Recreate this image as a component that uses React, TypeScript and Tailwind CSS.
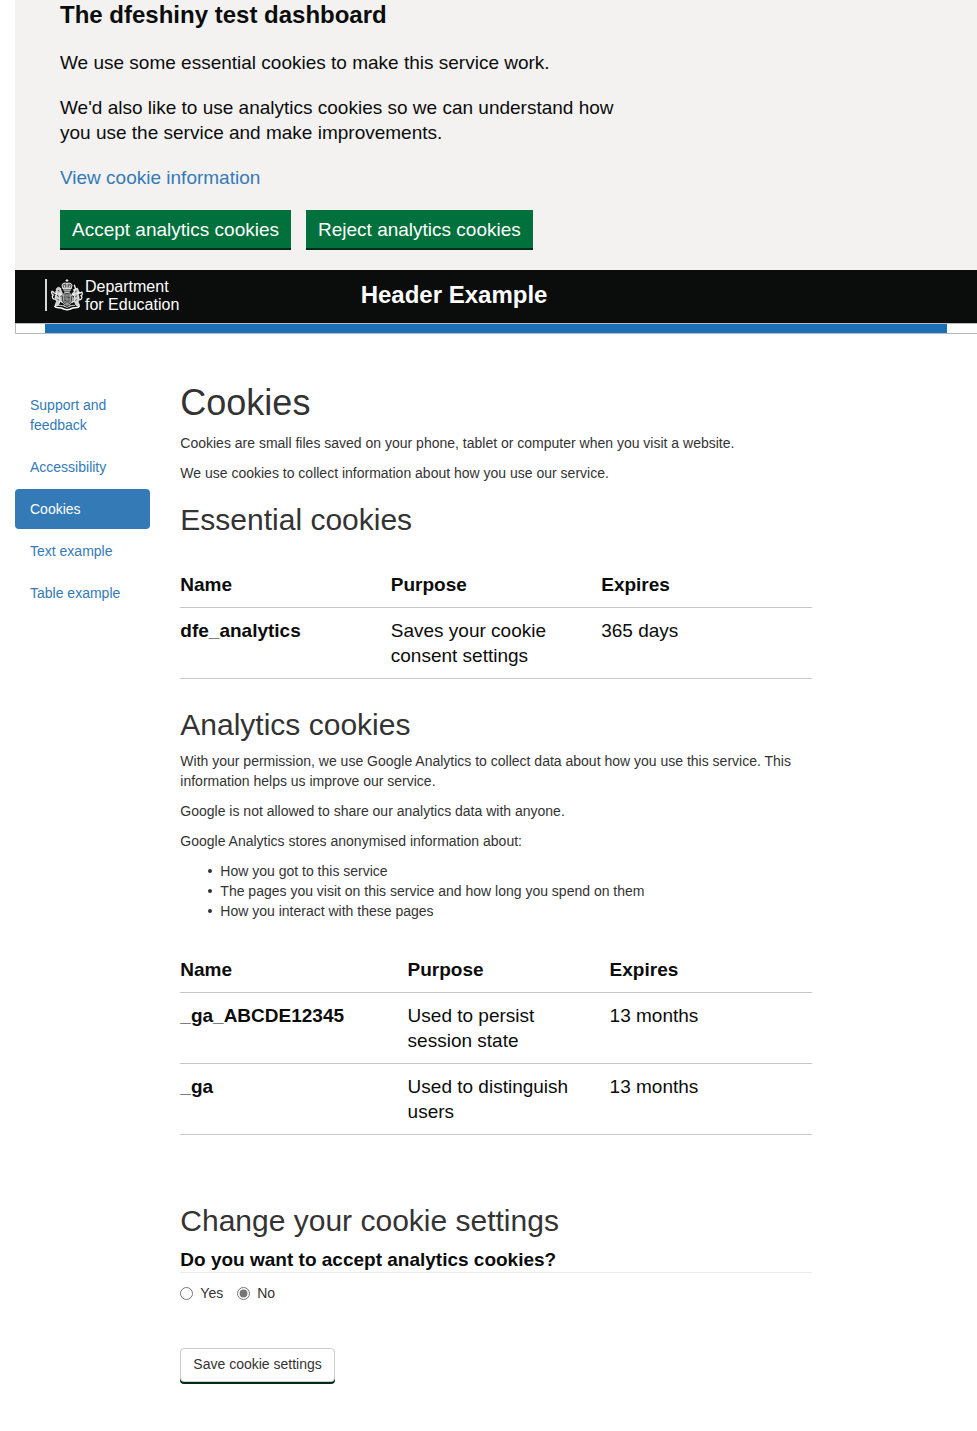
import type { ReactNode } from 'react';

type CookieRow = { name: string; purpose: string; expires: string };

const navItems = ['Support and feedback', 'Accessibility', 'Cookies', 'Text example', 'Table example'];

const analyticsUses = [
  'How you got to this service',
  'The pages you visit on this service and how long you spend on them',
  'How you interact with these pages',
];

const essentialCookies: CookieRow[] = [
  { name: 'dfe_analytics', purpose: 'Saves your cookie consent settings', expires: '365 days' },
];

const analyticsCookies: CookieRow[] = [
  { name: '_ga_ABCDE12345', purpose: 'Used to persist session state', expires: '13 months' },
  { name: '_ga', purpose: 'Used to distinguish users', expires: '13 months' },
];

function Crest() {
  return (
    <svg viewBox="0 0 32 32" className="h-8 w-8 shrink-0" fill="none" stroke="#fff" aria-hidden="true">
      {/* crown */}
      <path d="M16 0v3.4M14.6 1.5h2.8" strokeWidth="0.9" />
      <path
        d="M12 10L11 6.4C11.4 4 14.2 3.4 16 4.8c1.8-1.4 4.6-.8 5 1.6L20 10z"
        fill="#fff"
        fillOpacity="0.35"
        strokeWidth="0.9"
      />
      <path d="M16 5v4M13.2 6.2l.6 2.4M18.8 6.2l-.6 2.4M11.8 9.2h8.4" strokeWidth="0.8" />
      <path d="M12.4 11.6h7.2M13 13h6" strokeWidth="1" opacity="0.7" />
      {/* shield and garter */}
      <ellipse cx="16" cy="19.8" rx="5.6" ry="6.4" fill="#fff" fillOpacity="0.25" strokeWidth="0.8" opacity="0.85" />
      <path d="M12.6 16h6.8v5.2c0 2-1.8 3.2-3.4 4-1.6-.8-3.4-2-3.4-4z" strokeWidth="0.8" opacity="0.7" />
      <path d="M16 16v9M12.6 20h6.8M14.2 17v2M18 21.2v2M13.6 22l1.4 1M17.4 17.4h1.4" strokeWidth="0.7" opacity="0.7" />
      {/* lion */}
      <path
        d="M9.4 9C7 7.4 4.8 9.3 5.4 11.6c-1 .6-.8 1.8.2 2.2L4.4 17c-1 2.3.4 4.2 1.2 5.4L4 26.4h3.4l1.6-4c1-1.6.8-3.6 0-5.2l2.4-2.8-1.2-2.4z"
        fill="#fff"
        fillOpacity="0.8"
        strokeWidth="0.8"
      />
      <path
        d="M3.8 20.4C1 20 .6 17 2.4 16 .4 15.2.4 13 1.2 12.2l1.8 1.2M5.8 14.6l-3.4-1M8.4 14.8l3 1.2M9 21.6l2.4 2"
        strokeWidth="1.2"
      />
      {/* unicorn */}
      <path
        d="M22.6 10.4l3.8-1.2 1 2.2 1 2.4-1.2 1.4.8 3.4c.4 1.8-.2 3-1 4.2l1.6 3.6h-3.4l-1.8-3.8c-1-1.6-.8-3.8 0-5.2l-2.4-2.8 2.2-1.6z"
        fill="#fff"
        fillOpacity="0.8"
        strokeWidth="0.8"
      />
      <path
        d="M24.6 9.8l-1.4-4M28.2 20.8c2.8 0 3.4-2.8 1.8-4 1.6-.8 1.6-2.6.8-3.8l-1.6 1.2M26.2 14.6l3-1M23.6 15l-3 1.2M23 22l-2.4 1.8"
        strokeWidth="1.2"
      />
      {/* shading on the supporters */}
      <path
        d="M6.8 11.2l1.6 1M6 16.2l1.8 1.4M6.4 19.8l1.4 1.6M25.6 12l-1.4 1.2M26.2 16.6l-1.8 1.2M25.6 20.4l-1.2 1.2"
        stroke="#0b0c0c"
        strokeWidth="0.8"
      />
      {/* motto scroll */}
      <path
        d="M3.4 27c2 2.8 5 1 7 2 2 1.2 3.6 1.7 5.6 1.7s3.6-.5 5.6-1.7c2-1 5 .8 7-2"
        strokeWidth="1.5"
      />
      <path d="M8 26.4c2.6-.4 5 .6 8 2 3-1.4 5.4-2.4 8-2M12.4 26.4l1.4.8M19.6 26.4l-1.4.8" strokeWidth="1" opacity="0.8" />
    </svg>
  );
}

function BannerButton({ children }: { children: ReactNode }) {
  return (
    <button
      type="button"
      className="h-10 border-b-2 border-[#002d18] bg-[#00703c] px-3 pt-0.5 text-[19px] leading-6 text-white"
    >
      {children}
    </button>
  );
}

function CookieTable({ rows, widths }: { rows: CookieRow[]; widths: [string, string] }) {
  return (
    <table className="w-full table-fixed border-collapse text-left text-[19px] leading-[25px] text-[#0b0c0c]">
      <thead>
        <tr className="border-b border-[#c5c7c9]">
          <th scope="col" className={`py-2.5 pr-5 font-bold ${widths[0]}`}>Name</th>
          <th scope="col" className={`py-2.5 pr-5 font-bold ${widths[1]}`}>Purpose</th>
          <th scope="col" className="py-2.5 font-bold">Expires</th>
        </tr>
      </thead>
      <tbody>
        {rows.map((row) => (
          <tr key={row.name} className="border-b border-[#c5c7c9] align-top">
            <th scope="row" className="py-2.5 pr-5 font-bold">{row.name}</th>
            <td className="py-2.5 pr-5">{row.purpose}</td>
            <td className="py-2.5">{row.expires}</td>
          </tr>
        ))}
      </tbody>
    </table>
  );
}

function SectionHeading({ children }: { children: ReactNode }) {
  return <h2 className="text-[30px] leading-[33px]">{children}</h2>;
}

export default function App() {
  return (
    <div className="min-h-screen overflow-x-hidden bg-white font-['Liberation_Sans',Arial,sans-serif] text-sm leading-5 text-[#333]">
      <div className="pl-[15px]">
        <section
          aria-label="Cookies on this service"
          className="bg-[#f3f2f1] pb-5 pl-[45px] text-[19px] leading-[25px] text-[#0b0c0c]"
        >
          <div className="flex max-w-[580px] flex-col gap-5">
            <h2 className="text-2xl leading-[30px] font-bold">The dfeshiny test dashboard</h2>
            <p>We use some essential cookies to make this service work.</p>
            <p>We'd also like to use analytics cookies so we can understand how you use the service and make improvements.</p>
            <a href="#cookies" className="self-start text-[#337ab7]">View cookie information</a>
            <div className="flex gap-[15px]">
              <BannerButton>Accept analytics cookies</BannerButton>
              <BannerButton>Reject analytics cookies</BannerButton>
            </div>
          </div>
        </section>

        <header>
          <div className="flex h-[53px] bg-[#0b0c0c] px-[30px] text-white">
            <div className="flex w-1/3 items-start pt-2">
              <a href="#home" className="flex items-start text-base leading-[18px]">
                <span className="mt-px h-8 w-0.5 bg-[#d8d8d8]" />
                <span className="mt-px ml-1">
                  <Crest />
                </span>
                <span className="ml-0.5">
                  Department
                  <br />
                  for Education
                </span>
              </a>
            </div>
            <p className="pt-2.5 pl-[15px] text-2xl leading-[30px] font-bold">Header Example</p>
          </div>
          <div className="border-y border-l border-[#b8babb] pr-[30px] pl-[29px]">
            <div className="h-[9px] bg-[#1d70b8]" />
          </div>
        </header>
      </div>

      <div className="-mr-[15px] flex items-start pt-[49px] pb-12">
        <nav aria-label="Pages" className="w-1/6 px-[15px] pt-0.5">
          <ul className="flex flex-col gap-0.5">
            {navItems.map((item) => (
              <li key={item}>
                <a
                  href="#cookies"
                  aria-current={item === 'Cookies' ? 'page' : undefined}
                  className={
                    item === 'Cookies'
                      ? 'block rounded bg-[#337ab7] px-[15px] py-2.5 text-white'
                      : 'block rounded px-[15px] py-2.5 text-[#337ab7]'
                  }
                >
                  {item}
                </a>
              </li>
            ))}
          </ul>
        </nav>

        <main id="cookies" className="w-2/3 px-[15px]">
          <h1 className="text-4xl leading-10">Cookies</h1>
          <div className="mt-2.5 mb-5 flex flex-col gap-2.5">
            <p>Cookies are small files saved on your phone, tablet or computer when you visit a website.</p>
            <p>We use cookies to collect information about how you use our service.</p>
          </div>

          <SectionHeading>Essential cookies</SectionHeading>
          <div className="mt-[26px] mb-[29px]">
            <CookieTable rows={essentialCookies} widths={['w-1/3', 'w-1/3']} />
          </div>

          <SectionHeading>Analytics cookies</SectionHeading>
          <div className="mt-2.5 flex flex-col gap-2.5">
            <p>
              With your permission, we use Google Analytics to collect data about how you use this service. This
              information helps us improve our service.
            </p>
            <p>Google is not allowed to share our analytics data with anyone.</p>
            <p>Google Analytics stores anonymised information about:</p>
            <ul className="pl-7">
              {analyticsUses.map((use) => (
                <li
                  key={use}
                  className="flex items-center gap-2 before:size-1 before:shrink-0 before:rounded-full before:bg-[#333]"
                >
                  {use}
                </li>
              ))}
            </ul>
          </div>
          <div className="mt-[26px] mb-[69px]">
            <CookieTable rows={analyticsCookies} widths={['w-[36%]', 'w-[32%]']} />
          </div>

          <SectionHeading>Change your cookie settings</SectionHeading>
          <form className="mt-2.5" onSubmit={(event) => event.preventDefault()}>
            <fieldset>
              <legend className="w-full border-b border-[#eee] text-[19px] leading-[25px] font-bold text-[#0b0c0c]">
                Do you want to accept analytics cookies?
              </legend>
              <div className="mt-2.5 flex gap-3.5">
                <label className="flex items-center gap-[7px]">
                  <input type="radio" name="consent" value="yes" className="size-[13px] accent-[#767676]" />
                  Yes
                </label>
                <label className="flex items-center gap-[7px]">
                  <input type="radio" name="consent" value="no" defaultChecked className="size-[13px] accent-[#767676]" />
                  No
                </label>
              </div>
            </fieldset>
            <button
              type="submit"
              className="mt-[45px] h-[34px] rounded border border-[#ccc] bg-white px-3 pb-0.5 shadow-[0_2px_0_#002d18]"
            >
              Save cookie settings
            </button>
          </form>
        </main>
      </div>
    </div>
  );
}
